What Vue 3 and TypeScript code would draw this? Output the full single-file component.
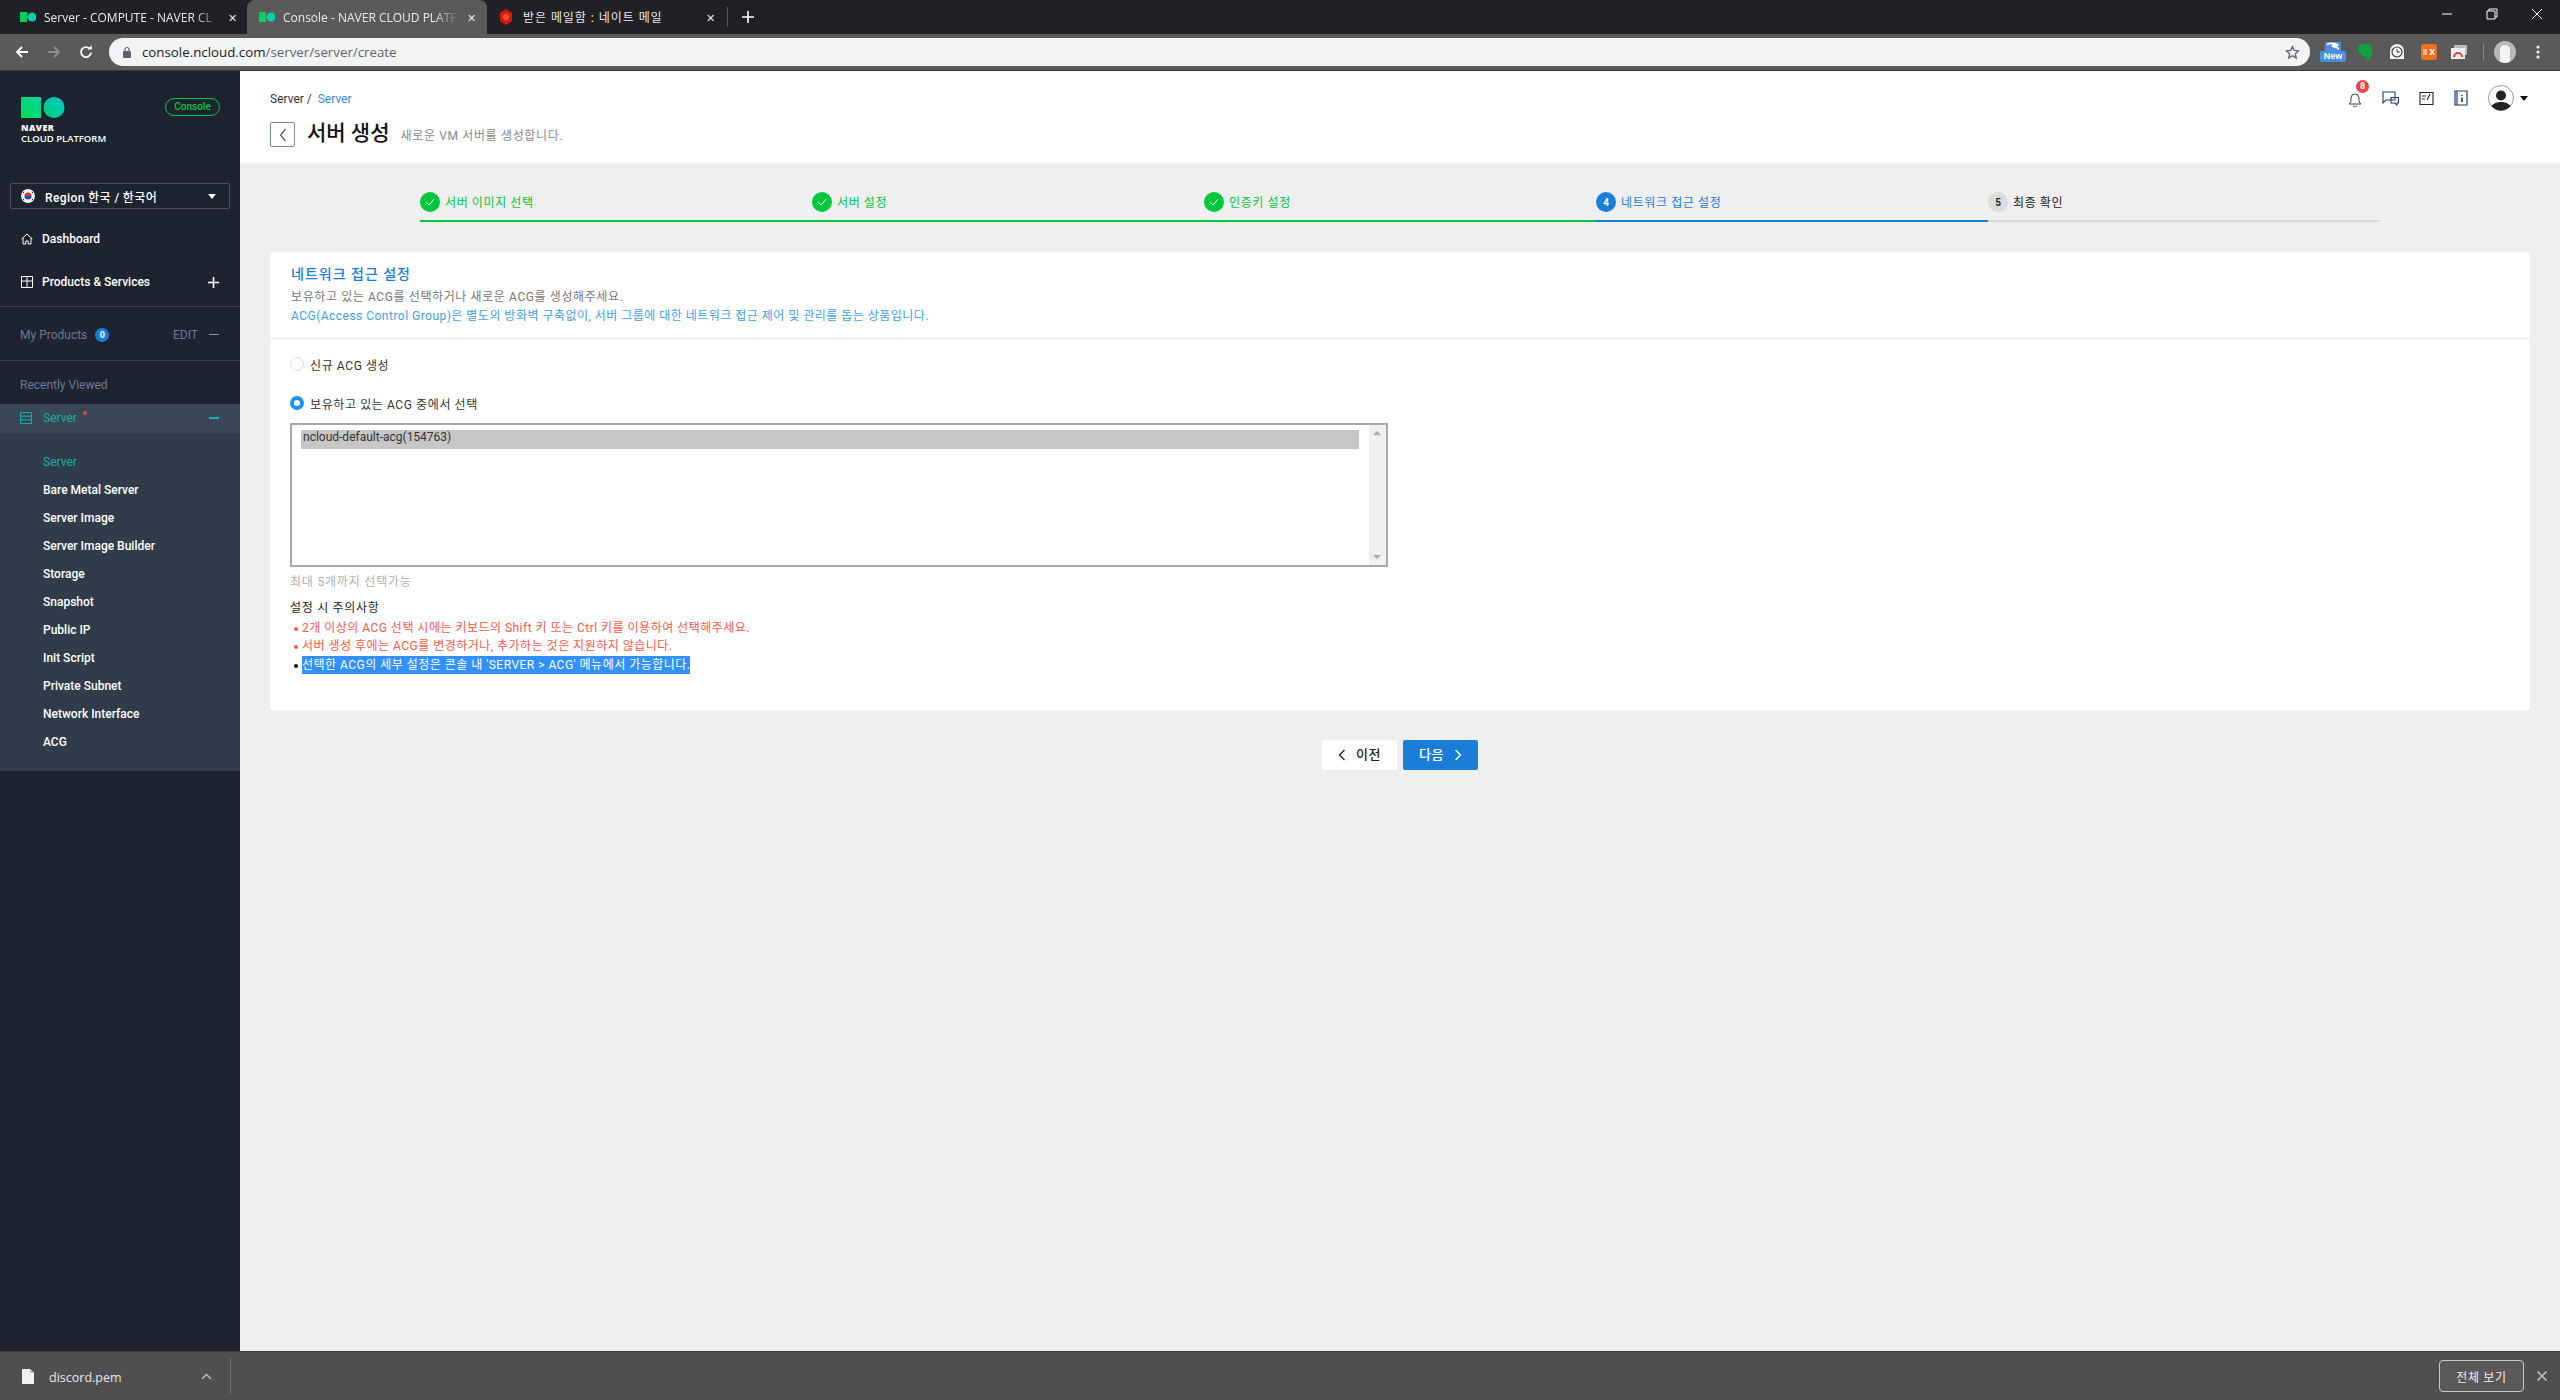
<script setup lang="ts">
interface Step { label: string; state: 'done' | 'active' | 'todo'; num: number }
const steps: Step[] = [
  { label: '서버 이미지 선택', state: 'done', num: 1 },
  { label: '서버 설정', state: 'done', num: 2 },
  { label: '인증키 설정', state: 'done', num: 3 },
  { label: '네트워크 접근 설정', state: 'active', num: 4 },
  { label: '최종 확인', state: 'todo', num: 5 },
]
const subItems: string[] = ['Bare Metal Server', 'Server Image', 'Server Image Builder', 'Storage', 'Snapshot', 'Public IP', 'Init Script', 'Private Subnet', 'Network Interface', 'ACG']
</script>

<template>
  <div class="screen">
    <div class="tabstrip">
      <div class="tab first">
        <svg class="fav" width="16" height="10" viewBox="0 0 16 10"><rect width="7" height="10" fill="#00d060"/><circle cx="12" cy="5" r="4.5" fill="#00d0b0"/></svg>
        <span class="tab-title fade">Server - COMPUTE - NAVER CL</span>
        <span class="tab-x">✕</span>
      </div>
      <div class="tab active">
        <svg class="fav" width="16" height="10" viewBox="0 0 16 10"><rect width="7" height="10" fill="#00d060"/><circle cx="12" cy="5" r="4.5" fill="#00d0b0"/></svg>
        <span class="tab-title fade">Console - NAVER CLOUD PLATF</span>
        <span class="tab-x">✕</span>
      </div>
      <div class="tab third">
        <svg class="fav" width="14" height="16" viewBox="0 0 14 16"><path d="M7 0l6 4v8l-6 4-6-4V4z" fill="#d81810"/><path d="M7 4l3 2.5v3L7 12 4 9.500v-3z" fill="#f04a30"/></svg>
        <span class="tab-title kr">받은 메일함 : 네이트 메일</span>
        <span class="tab-x">✕</span>
      </div>
      <span class="tab-sep"></span>
      <svg class="plus" width="14" height="14" viewBox="0 0 14 14"><path d="M7 1v12M1 7h12" stroke="#fff" stroke-width="1.600"/></svg>
      <div class="win-controls">
        <svg width="12" height="12" viewBox="0 0 12 12"><path d="M1 6h10" stroke="#fff" stroke-width="1"/></svg>
        <svg width="12" height="12" viewBox="0 0 12 12"><path d="M3 3V1h8v8H9M1 3h8v8H1z" stroke="#fff" stroke-width="1" fill="none"/></svg>
        <svg width="12" height="12" viewBox="0 0 12 12"><path d="M1 1l10 10M11 1L1 11" stroke="#fff" stroke-width="1"/></svg>
      </div>
    </div>
    <div class="toolbar">
      <div class="nav-icons">
        <svg width="16" height="16" viewBox="0 0 16 16"><path d="M14 8H3M8 3L3 8l5 5" stroke="#fff" stroke-width="1.800" fill="none"/></svg>
        <svg width="16" height="16" viewBox="0 0 16 16"><path d="M2 8h11M8 3l5 5-5 5" stroke="#8e8e8e" stroke-width="1.800" fill="none"/></svg>
        <svg width="16" height="16" viewBox="0 0 16 16"><path d="M13 8.500A5 5 0 1 1 11.500 4.500" stroke="#fff" stroke-width="1.800" fill="none"/><path d="M9.500 5.500h4.300V1.200z" fill="#fff"/></svg>
      </div>
      <div class="address">
        <svg width="10" height="12" viewBox="0 0 10 12"><rect x="1" y="5" width="8" height="7" rx="1" fill="#5f6368"/><path d="M3 5V3.500a2 2 0 0 1 4 0V5" stroke="#5f6368" stroke-width="1.200" fill="none"/></svg>
        <span class="url"><span class="host">console.ncloud.com</span>/server/server/create</span>
        <svg class="star" width="15" height="15" viewBox="0 0 15 15"><path d="M7.500 1.500l1.800 4 4.300.4-3.300 2.900 1 4.300-3.800-2.300-3.800 2.300 1-4.300L1.400 5.900l4.300-.4z" fill="none" stroke="#5f6368" stroke-width="1.300"/></svg>
      </div>
      <div class="extensions">
        <div class="ext-new">
          <svg width="16" height="9" viewBox="0 0 16 9"><rect width="16" height="9" fill="#4a90e2"/><path d="M2 2.500c4-2 9-1 11 1-3-1-7 0-5 1 3 .8 6 1 5 3" stroke="#fff" stroke-width="1.800" fill="none"/></svg>
          <span class="new-label">New</span>
        </div>
        <svg class="ext e1" width="16" height="18" viewBox="0 0 16 18"><path d="M2 3l3-2h5c3 0 5 2 5 6 0 5-1 9-4 10-2 0-2-2-1-3-3 0-5-1-6-3-2-1-3-3-3-5z" fill="#12a33d"/></svg>
        <svg class="ext" width="16" height="16" viewBox="0 0 16 16"><path d="M1 15V7a7 7 0 0 1 14 0v8z" fill="#f4f4f4"/><circle cx="8" cy="8" r="5" fill="none" stroke="#444" stroke-width="1.200"/><path d="M8 5v3h3" fill="none" stroke="#444"/></svg>
        <div class="ext-x"><span class="ex-bar"></span>x</div>
        <svg class="ext e4" width="16" height="14" viewBox="0 0 16 14"><rect x="3" y="0" width="13" height="10" fill="#bbb"/><rect x="0" y="3" width="14" height="11" fill="#eee"/><path d="M3 12a4 4 0 0 1 8 0" fill="none" stroke="#e04030" stroke-width="2"/></svg>
        <span class="ext-sep"></span>
        <div class="ext-avatar"><span class="avatar-face"></span></div>
        <svg width="4" height="14" viewBox="0 0 4 14"><circle cx="2" cy="2" r="1.600" fill="#eee"/><circle cx="2" cy="7" r="1.600" fill="#eee"/><circle cx="2" cy="12" r="1.600" fill="#eee"/></svg>
      </div>
    </div>

    <div class="body">
      <aside class="sidebar">
        <div class="brand">
          <div class="logo-wrap">
            <svg width="44" height="21" viewBox="0 0 44 21">
              <defs>
                <linearGradient id="lg1" x1="1" y1="0" x2="0" y2="1"><stop offset="0" stop-color="#00d2a0"/><stop offset="1" stop-color="#00e050"/></linearGradient>
                <linearGradient id="lg2" x1="0" y1="1" x2="1" y2="0"><stop offset="0" stop-color="#00d070"/><stop offset="1" stop-color="#00c8d0"/></linearGradient>
              </defs>
              <rect width="20" height="21" fill="url(#lg1)"/>
              <circle cx="33" cy="10.500" r="10.500" fill="url(#lg2)"/>
            </svg>
            <div class="logo-t1">NAVER</div>
            <div class="logo-t2">CLOUD PLATFORM</div>
          </div>
          <span class="console-badge">Console</span>
        </div>
        <div class="region">
          <svg width="14" height="14" viewBox="0 0 14 14"><circle cx="7" cy="7" r="7" fill="#eee"/><path d="M3.500 7a3.500 3.500 0 0 1 7 0z" fill="#d8342c"/><path d="M3.500 7a3.500 3.500 0 0 0 7 0z" fill="#2a4a9c"/><path d="M2 3l1 1M12 3l-1 1M2 11l1-1M12 11l-1-1" stroke="#333"/></svg>
          <span class="region-text">Region 한국 / 한국어</span>
          <span class="caret"></span>
        </div>
        <div class="nav-row dash">
          <svg width="12" height="12" viewBox="0 0 12 12"><path d="M.700 6L6 1l5.300 5M2 5v6h2.800V8h2.400v3H10V5" fill="none" stroke="#fff"/></svg>
          <span>Dashboard</span>
        </div>
        <div class="nav-row prod">
          <svg width="12" height="12" viewBox="0 0 12 12"><path d="M.500 .500h11v11H.500zM6 .500v11M.500 5h11" fill="none" stroke="#fff"/></svg>
          <span>Products &amp; Services</span>
          <svg class="row-end" width="11" height="11" viewBox="0 0 11 11"><path d="M5.500 0v11M0 5.500h11" stroke="#fff" stroke-width="1.600"/></svg>
        </div>
        <div class="section my">
          <span class="muted">My Products</span>
          <span class="count">0</span>
          <span class="edit">EDIT</span>
          <span class="dash-mark"></span>
        </div>
        <div class="section recent"><span class="muted">Recently Viewed</span></div>
        <div class="server-row">
          <svg width="12" height="12" viewBox="0 0 12 12"><path d="M.500 .500h11v11H.500zM.500 4.200h11M.500 7.800h11" fill="none" stroke="#14b0b0"/></svg>
          <span class="server-label">Server</span>
          <span class="red-dot"></span>
          <span class="dash-mark teal"></span>
        </div>
        <div class="submenu">
          <div class="sub current">Server</div>
          <div v-for="item in subItems" :key="item" class="sub">{{ item }}</div>
        </div>
      </aside>

      <main class="main">
        <header class="page-head">
          <div class="crumb">Server / &nbsp;<span class="crumb-link">Server</span></div>
          <div class="title-row">
            <span class="back-btn"><svg width="8" height="14" viewBox="0 0 8 14"><path d="M6.500 1L1.500 7l5 6" fill="none" stroke="#555" stroke-width="1.200"/></svg></span>
            <h1 class="title">서버 생성</h1>
            <span class="subtitle">새로운 VM 서버를 생성합니다.</span>
          </div>
          <div class="head-icons">
            <div class="bell">
              <svg width="14" height="16" viewBox="0 0 14 16"><path d="M1 13c2-1 2-3 2-6a4 4 0 0 1 8 0c0 3 0 5 2 6zM5.500 14.500a1.500 1.500 0 0 0 3 0" fill="none" stroke="#444"/></svg>
              <span class="bell-badge">8</span>
            </div>
            <svg width="17" height="15" viewBox="0 0 17 15"><path d="M1 1h12v8H4l-3 3zM9 6.500h7.500v5.500H15v2l-2.500-2H9z" fill="#fff" stroke="#1c3f6a" stroke-width="1.100"/></svg>
            <svg width="15" height="15" viewBox="0 0 15 15"><path d="M1 1.500h13v12H1zM3 5h4M3 8h3M8 9l3-6" fill="none" stroke="#222" stroke-width="1.100"/></svg>
            <svg width="14" height="16" viewBox="0 0 14 16"><path d="M1 1h12v14H1zM3 1v14" fill="none" stroke="#1c3f6a" stroke-width="1.200"/><path d="M8 5v1M8 7.500V12" stroke="#222" stroke-width="1.500"/></svg>
            <div class="user">
              <svg width="26" height="26" viewBox="0 0 26 26">
                <defs><clipPath id="uclip"><circle cx="13" cy="13" r="12.500"/></clipPath></defs>
                <circle cx="13" cy="13" r="12.500" fill="#fff" stroke="#8a9aa8"/>
                <g clip-path="url(#uclip)"><circle cx="13" cy="10.500" r="5" fill="#222"/><path d="M2 26c0-7 6-9 11-9s11 2 11 9z" fill="#222"/></g>
              </svg>
              <span class="user-caret"></span>
            </div>
          </div>
        </header>

        <div class="steps">
          <div v-for="s in steps" :key="s.num" class="step" :class="s.state">
            <span class="step-icon">
              <svg v-if="s.state === 'done'" width="10" height="8" viewBox="0 0 10 8"><path d="M1 4l3 3 5-6" fill="none" stroke="#fff" stroke-width="1"/></svg>
              <template v-else>{{ s.num }}</template>
            </span>
            <span class="step-label">{{ s.label }}</span>
          </div>
        </div>

        <section class="card">
          <div class="card-head">
            <h2 class="card-title">네트워크 접근 설정</h2>
            <p class="desc">보유하고 있는 ACG를 선택하거나 새로운 ACG를 생성해주세요.</p>
            <p class="desc link">ACG(Access Control Group)은 별도의 방화벽 구축없이, 서버 그룹에 대한 네트워크 접근 제어 및 관리를 돕는 상품입니다.</p>
          </div>
          <div class="card-body">
            <label class="radio-row"><span class="radio"></span>신규 ACG 생성</label>
            <label class="radio-row second"><span class="radio on"></span>보유하고 있는 ACG 중에서 선택</label>
            <div class="listbox">
              <div class="list-area"><div class="list-item">ncloud-default-acg(154763)</div></div>
              <div class="list-scroll"><span class="arrow up"></span><span class="arrow down"></span></div>
            </div>
            <p class="hint">최대 5개까지 선택가능</p>
            <p class="notice-title">설정 시 주의사항</p>
            <ul class="notice">
              <li class="warn">2개 이상의 ACG 선택 시에는 키보드의 Shift 키 또는 Ctrl 키를 이용하여 선택해주세요.</li>
              <li class="warn">서버 생성 후에는 ACG를 변경하거나, 추가하는 것은 지원하지 않습니다.</li>
              <li class="plain"><span class="selected">선택한 ACG의 세부 설정은 콘솔 내 'SERVER &gt; ACG' 메뉴에서 가능합니다.</span></li>
            </ul>
          </div>
        </section>

        <div class="actions">
          <button class="btn prev" type="button">
            <svg width="8" height="12" viewBox="0 0 8 12"><path d="M6.500 1L1.500 6l5 5" fill="none" stroke="#222" stroke-width="1.300"/></svg>
            <span class="btn-text">이전</span>
          </button>
          <button class="btn next" type="button">
            <span class="btn-text">다음</span>
            <svg width="8" height="12" viewBox="0 0 8 12"><path d="M1.500 1l5 5-5 5" fill="none" stroke="#fff" stroke-width="1.300"/></svg>
          </button>
        </div>
      </main>
    </div>

    <footer class="downloads">
      <div class="dl-item">
        <svg width="12" height="15" viewBox="0 0 12 15"><path d="M0 0h8l4 4v11H0z" fill="#f1f1f1"/><path d="M8 0v4h4" fill="#bbb"/></svg>
        <span class="dl-name">discord.pem</span>
        <svg class="dl-chev" width="11" height="7" viewBox="0 0 11 7"><path d="M1 6l4.500-4.500L10 6" fill="none" stroke="#b8b8b8" stroke-width="1.600"/></svg>
      </div>
      <span class="dl-sep"></span>
      <button class="dl-all" type="button">전체 보기</button>
      <svg class="dl-close" width="10" height="10" viewBox="0 0 10 10"><path d="M.500 .500l9 9M9.500 .500l-9 9" stroke="#c8c8c8" stroke-width="1.500"/></svg>
    </footer>
  </div>
</template>

<style>
html, body { margin: 0; padding: 0; background: #efefef; }
</style>

<style scoped>
* { box-sizing: border-box; }
.screen {
  width: 2560px; height: 1400px; display: flex; flex-direction: column; overflow: hidden;
  font-family: Roboto, "Noto Sans CJK KR", sans-serif; font-size: 12px; color: #222; background: #efefef;
}
.tabstrip { height: 34px; background: #202124; display: flex; align-items: center; position: relative; flex: none; }
.tab { height: 34px; display: flex; align-items: center; color: #e8eaed; font-family: "Open Sans", "Noto Sans CJK KR", sans-serif; font-size: 12px; position: relative; }
.tab.first { width: 247px; padding: 0 8px 0 20px; }
.tab.active { width: 240px; padding: 0 9px 0 12px; background: #5a5a5a; border-radius: 8px 8px 0 0; }
.tab.third { width: 240px; padding: 0 10px 0 12px; }
.fav { flex: none; margin-right: 8px; }
.tab-title { flex: 1; white-space: nowrap; min-width: 0; overflow: hidden; }
.tab-title.kr { letter-spacing: .9px; padding-left: 2px; }
.tab-title.fade { -webkit-mask-image: linear-gradient(to right, #000 85%, transparent); mask-image: linear-gradient(to right, #000 85%, transparent); }
.tab-x { flex: none; width: 14px; font-size: 11px; text-align: center; margin-left: 4px; }
.tab-sep { width: 1px; height: 20px; background: #55585c; flex: none; }
.plus { margin-left: 13px; flex: none; }
.win-controls { margin-left: auto; display: flex; gap: 33px; padding-right: 17px; align-items: center; margin-top: -6px; }
.toolbar { height: 37px; background: #5a5a5a; border-bottom: 1px solid #3a3a3a; display: flex; align-items: center; flex: none; padding-bottom: 1px; }
.nav-icons { display: flex; gap: 16px; padding-left: 14px; width: 109px; flex: none; }
.address { width: 2201px; height: 28px; margin-top: 1px; background: #f1f3f4; border-radius: 14px; display: flex; align-items: center; padding: 0 10px 0 13px; flex: none; }
.url { margin-left: 10px; font-family: "Open Sans", sans-serif; font-size: 13.300px; color: #5f6368; }
.host { color: #202124; }
.star { margin-left: auto; }
.extensions { flex: 1; display: flex; align-items: center; padding-left: 10px; position: relative; height: 30px; }
.ext-new { width: 26px; display: flex; flex-direction: column; align-items: center; flex: none; }
.new-label { background: #4a90e2; color: #fff; font: bold 9px "Liberation Sans", sans-serif; width: 26px; text-align: center; border-radius: 2px; line-height: 11px; }
.ext { margin-left: 16px; flex: none; }
.ext.e1 { margin-left: 11px; }
.ext.e4 { margin-left: 14px; }
.ext-x { margin-left: 16px; width: 16px; height: 16px; background: #f07020; border-radius: 3px; color: #fff; font: bold 10px/16px "Liberation Sans", sans-serif; display: flex; justify-content: flex-end; padding-right: 2px; flex: none; }
.ex-bar { width: 4px; height: 6px; background: #f8b888; margin: 5px 2px 0 0; }
.ext-sep { width: 1px; height: 16px; background: #8a8a8a; margin-left: 16px; flex: none; }
.ext-avatar { width: 22px; height: 22px; border-radius: 50%; background: #b8b8b8; margin-left: 10px; margin-right: 20px; display: flex; justify-content: center; align-items: flex-end; overflow: hidden; flex: none; }
.avatar-face { width: 10px; height: 18px; background: #f4f4f4; border-radius: 5px 5px 3px 3px; }

.body { flex: 1; display: flex; min-height: 0; }
.sidebar { width: 240px; flex: none; background: #1e2330; color: #fff; font-weight: 500; }
.brand { height: 112px; padding: 26px 20px 0 21px; display: flex; justify-content: space-between; align-items: flex-start; }
.logo-wrap svg { display: block; }
.logo-t1 { font: 800 9px/10px "Open Sans", sans-serif; margin-top: 5px; letter-spacing: .4px; }
.logo-t2 { font: 600 9.500px/11px "Open Sans", sans-serif; }
.console-badge { width: 55px; height: 18px; border: 1px solid #00c73c; border-radius: 9px; color: #00c73c; font-size: 10px; line-height: 16px; text-align: center; margin-top: 1px; }
.region { margin: 0 10px; height: 26px; border: 1px solid #4a4e5a; border-radius: 2px; display: flex; align-items: center; padding: 0 13px 0 10px; font-size: 12px; }
.region-text { margin-left: 10px; flex: 1; letter-spacing: .4px; }
.caret { width: 0; height: 0; border-left: 4px solid transparent; border-right: 4px solid transparent; border-top: 5px solid #fff; }
.nav-row { display: flex; align-items: center; padding: 0 21px 0 21px; gap: 9px; height: 20px; }
.nav-row .row-end { margin-left: auto; }
.dash { margin-top: 20px; }
.prod { margin-top: 23px; }
.section { border-top: 1px solid #3c404c; display: flex; align-items: center; padding: 0 21px 0 20px; }
.my { margin-top: 14px; height: 54px; font-weight: 400; padding-top: 2px; }
.recent { height: 44px; font-weight: 400; padding-top: 5px; }
.muted { color: #6a7a96; }
.count { width: 14px; height: 14px; border-radius: 50%; background: #1a7ad8; color: #fff; font-size: 9px; font-weight: 700; line-height: 14px; text-align: center; margin-left: 8px; }
.edit { margin-left: auto; color: #6a7a96; margin-right: 11px; }
.dash-mark { width: 10px; height: 1px; background: #8a94a8; }
.dash-mark.teal { background: #14b8b8; height: 2px; margin-left: auto; }
.server-row { height: 29px; background: #3a4757; display: flex; align-items: center; padding: 0 21px 2px 20px; color: #14b0a8; font-weight: 400; }
.server-label { margin-left: 11px; }
.red-dot { width: 4px; height: 4px; border-radius: 50%; background: #ef4030; margin: -9px 0 0 6px; }
.submenu { background: #303c4a; padding: 15px 0 13px 43px; height: 338px; }
.sub { height: 28px; line-height: 28px; color: #fff; }
.sub.current { color: #14b0a8; font-weight: 400; }

.main { flex: 1; min-width: 0; display: flex; flex-direction: column; background: #efefef; }
.page-head { height: 92px; background: #fff; padding: 20px 0 0 30px; position: relative; flex: none; }
.crumb { line-height: 16px; color: #333; }
.crumb-link { color: #3a86e0; }
.title-row { display: flex; align-items: center; margin-top: 15px; height: 25px; }
.back-btn { width: 25px; height: 25px; border: 1px solid #7a8a9a; border-radius: 2px; display: flex; align-items: center; justify-content: center; }
.title { font-size: 21px; font-weight: 500; margin: -2px 0 0 12px; line-height: 25px; color: #111; }
.subtitle { color: #888; margin-left: 11px; font-size: 12px; letter-spacing: .65px; }
.head-icons { position: absolute; top: 14px; right: 32px; display: flex; align-items: center; gap: 20px; height: 26px; }
.bell { position: relative; display: flex; margin-top: 1px; }
.bell-badge { position: absolute; left: 8px; top: -11px; width: 13px; height: 13px; border-radius: 50%; background: #f04444; color: #fff; font-size: 9px; font-weight: 700; line-height: 13px; text-align: center; }
.user { display: flex; align-items: center; gap: 6px; }
.user-caret { width: 0; height: 0; border-left: 4px solid transparent; border-right: 4px solid transparent; border-top: 5px solid #111; }

.steps { display: grid; grid-template-columns: repeat(5, 1fr); margin: 29px 180px 0; flex: none; }
.step { height: 30px; border-bottom: 2px solid #d8d8d8; display: flex; align-items: flex-start; gap: 5px; }
.step.done { border-color: #00c73c; color: #00c73c; }
.step.active { border-color: #1a7dd8; color: #1a7dd8; }
.step.todo { color: #222; }
.step-icon { width: 20px; height: 20px; border-radius: 50%; display: flex; align-items: center; justify-content: center; font-size: 10px; font-weight: 700; }
.done .step-icon { background: #00c73c; }
.active .step-icon { background: #1a7dd8; color: #fff; }
.todo .step-icon { background: #dcdcdc; color: #222; }
.step-label { line-height: 20px; font-size: 12px; padding-top: 1px; letter-spacing: .6px; }

.card { margin: 30px 30px 0; background: #fff; border-radius: 2px; height: 458px; flex: none; }
.card-head { padding: 13px 21px 13px; border-bottom: 1px solid #e8e8e8; height: 87px; }
.card-title { margin: 0 0 5px; font-size: 14px; font-weight: 500; line-height: 18px; color: #1a7dd8; letter-spacing: 1px; }
.desc { margin: 0; line-height: 19px; color: #777; letter-spacing: .6px; }
.desc.link { color: #3d9fe8; letter-spacing: .48px; }
.card-body { padding: 15px 20px 0; }
.radio-row { display: flex; align-items: center; height: 20px; gap: 6px; color: #333; letter-spacing: .6px; }
.radio-row.second { margin-top: 19px; }
.radio { width: 14px; height: 14px; border-radius: 50%; border: 1px solid #ddd; background: #fff; flex: none; }
.radio.on { border: 4px solid #2090f0; }
.listbox { margin-top: 10px; width: 1098px; height: 144px; border: 2px solid #a9a9a9; display: flex; }
.list-area { flex: 1; padding: 5px 10px 0 9px; }
.list-item { background: #c6c6c6; height: 19px; line-height: 15px; padding-left: 2px; color: #333; }
.list-scroll { width: 17px; background: #f0f0f0; position: relative; flex: none; }
.arrow { position: absolute; left: 4px; width: 0; height: 0; border-left: 4px solid transparent; border-right: 4px solid transparent; }
.arrow.up { top: 6px; border-bottom: 4px solid #a8a8a8; }
.arrow.down { bottom: 6px; border-top: 4px solid #a8a8a8; }
.hint { margin: 6px 0 0; line-height: 18px; color: #b0b0b0; letter-spacing: .8px; }
.notice-title { margin: 8px 0 0; line-height: 18px; color: #222; letter-spacing: .7px; }
.notice { list-style: none; margin: 2px 0 0; padding: 0; letter-spacing: .48px; }
.notice li { line-height: 18px; padding-left: 12px; position: relative; }
.notice li.plain { margin-top: 1px; }
.notice li::before { content: ""; position: absolute; left: 4px; top: 8px; width: 4px; height: 4px; border-radius: 50%; background: currentColor; }
.warn { color: #fa5a48; }
.plain { color: #111; }
.selected { background: #3390ff; color: #fff; display: inline-block; line-height: 18px; }

.actions { display: flex; justify-content: center; gap: 6px; margin-top: 30px; flex: none; }
.btn { width: 75px; height: 30px; border: none; border-radius: 2px; font: 500 13px Roboto, "Noto Sans CJK KR", sans-serif; display: flex; align-items: center; justify-content: center; gap: 10px; }
.btn-text { margin-top: -3px; letter-spacing: .5px; }
.btn.prev { background: #fff; color: #222; }
.btn.next { background: #1a7dd8; color: #fff; }

.downloads { height: 49px; flex: none; background: #504e50; border-top: 1px solid #3c3c3e; display: flex; align-items: center; color: #e8e8e8; }
.dl-item { width: 230px; display: flex; align-items: center; padding-left: 22px; flex: none; }
.dl-name { font: 12.500px "Open Sans", sans-serif; margin: 2px 0 0 15px; }
.dl-chev { margin-left: auto; margin-right: 18px; }
.dl-sep { width: 1px; height: 36px; background: #6c6c6c; flex: none; }
.dl-all { margin-left: auto; width: 85px; height: 32px; background: #5a5859; border: 1px solid #c8c8c8; border-radius: 4px; color: #f0f0f0; font: 12px "Noto Sans CJK KR", sans-serif; letter-spacing: .7px; }
.dl-close { margin: 0 13px 0 13px; }
</style>
